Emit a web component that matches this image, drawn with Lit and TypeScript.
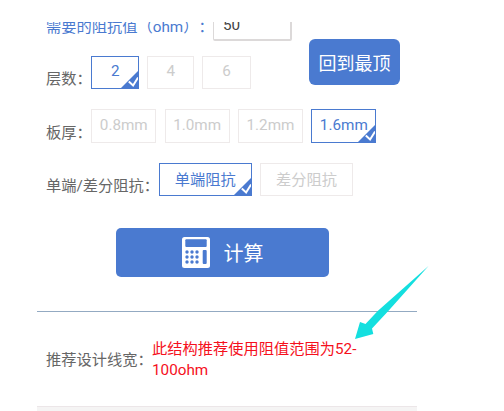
import { LitElement, html, css, svg } from "lit";
import { customElement } from "lit/decorators.js";

const cols = [0, 1, 2];
const rows = [0, 1, 2];

@customElement("app-root")
export class AppRoot extends LitElement {
  static styles = css`
    :host {
      display: block;
      position: relative;
      width: 504px;
      height: 411px;
      overflow: hidden;
      background: #fff;
      font-family: Roboto, "Noto Sans CJK SC", sans-serif;
      font-size: 15.25px;
      color: #666;
      text-spacing-trim: space-all;
    }
    .main {
      display: flex;
      flex-direction: column;
      padding: 22px 87px 0 37px;
    }
    .clip {
      height: 19px;
      overflow: hidden;
      display: flex;
      align-items: flex-end;
      margin-bottom: 15px;
    }
    .clip-row {
      display: flex;
      align-items: center;
      padding-left: 9px;
      flex: none;
    }
    .clip-label {
      color: #4a7ad0;
      width: 167px;
      white-space: nowrap;
      padding-top: 2px;
    }
    .input {
      box-sizing: border-box;
      width: 79px;
      height: 34px;
      border: 1px solid #dcd9d9;
      border-bottom-width: 2px;
      border-right-width: 2px;
      border-radius: 2px;
      padding: 2px 0 0 9px;
      line-height: 30px;
      color: #444;
    }
    .row {
      display: flex;
      align-items: center;
      padding-left: 9px;
      white-space: nowrap;
    }
    .lab {
      flex: none;
      padding-top: 9px;
    }
    .chips {
      display: flex;
      gap: 8px;
    }
    .chips.wide {
      gap: 8.35px;
    }
    .chip {
      box-sizing: border-box;
      position: relative;
      height: 33.4px;
      padding-bottom: 3px;
      display: flex;
      align-items: center;
      justify-content: center;
      border: 1px solid #eeeaea;
      color: #ccc;
      overflow: hidden;
    }
    .chip.on {
      border-color: #4a7ad0;
      color: #4a7ad0;
    }
    .corner {
      position: absolute;
      right: -1px;
      bottom: -1px;
      width: 19px;
      height: 19px;
    }
    .r1 { margin-bottom: 20px; }
    .r2 { margin-bottom: 20px; }
    .calc {
      align-self: flex-start;
      margin: 32px 0 34px 79px;
      width: 213px;
      height: 48.4px;
      background: #4a7ad0;
      border-radius: 5px;
      display: flex;
      align-items: center;
      justify-content: center;
      gap: 14px;
      color: #fff;
      font-size: 20px;
    }
    .calc svg { display: block; flex: none; }
    hr {
      width: 380px;
      margin: 0;
      border: 0;
      border-top: 1px solid #93aac2;
    }
    .result {
      display: flex;
      align-items: center;
      padding: 24px 0 0 9px;
      height: 69px;
      box-sizing: border-box;
    }
    .result .lab {
      width: 106.8px;
      margin-right: -0.8px;
      padding-top: 0;
      white-space: nowrap;
    }
    .red {
      color: #f5101c;
      width: 208px;
      line-height: 21px;
      padding-top: 3px;
    }
    .foot {
      margin-top: 25px;
      width: 380px;
      height: 10px;
      background: #f5f4f4;
      border-top: 1px solid #ece6e8;
    }
    .top {
      position: absolute;
      left: 309px;
      top: 39px;
      width: 91px;
      height: 46px;
      border-radius: 6px;
      background: #4a7ad0;
      color: #fff;
      font-size: 18px;
      display: flex;
      align-items: center;
      justify-content: center;
    }
    .arrow {
      position: absolute;
      left: 0;
      top: 0;
      pointer-events: none;
    }
  `;

  private corner() {
    return html`<svg class="corner" viewBox="0 0 19 19">
      <path d="M19 0V19H0Z" fill="#4a7ad0"></path>
      <path d="M8.8 11.5l4.3 4 5-8" fill="none" stroke="#fff" stroke-width="2"></path>
    </svg>`;
  }

  private chip(text: string, w: number, on = false) {
    return html`<div class="chip ${on ? "on" : ""}" style="width:${w}px">
      ${text}${on ? this.corner() : ""}
    </div>`;
  }

  private calcIcon() {
    return html`<svg width="28" height="31" viewBox="0 0 28 31">
      <rect width="28" height="31" rx="2.5" fill="#fff"></rect>
      <rect x="3.3" y="2.3" width="21.4" height="7.7" rx="1" fill="#4a7ad0"></rect>
      ${rows.map((r) =>
        cols.map(
          (c) => svg`<circle cx="${5 + c * 5}" cy="${15 + r * 5}" r="1.7" fill="#4a7ad0"></circle>`
        )
      )}
      <rect x="20.7" y="13" width="4" height="14" rx="1" fill="#4a7ad0"></rect>
    </svg>`;
  }

  render() {
    return html`
      <div class="main">
        <div class="clip">
          <div class="clip-row">
            <div class="clip-label">需要的阻抗值（ohm）：</div>
            <div class="input">50</div>
          </div>
        </div>
        <div class="row r1">
          <div class="lab" style="width:45.3px">层数：</div>
          <div class="chips">
            ${this.chip("2", 48, true)}${this.chip("4", 47)}${this.chip("6", 48.4)}
          </div>
        </div>
        <div class="row r2">
          <div class="lab" style="width:45.3px">板厚：</div>
          <div class="chips wide">
            ${this.chip("0.8mm", 65)}${this.chip("1.0mm", 65)}${this.chip("1.2mm", 65)}${this.chip("1.6mm", 65, true)}
          </div>
        </div>
        <div class="row">
          <div class="lab" style="width:112.7px">单端/差分阻抗：</div>
          <div class="chips">
            ${this.chip("单端阻抗", 93.3, true)}${this.chip("差分阻抗", 93)}
          </div>
        </div>
        <div class="calc">${this.calcIcon()}<span>计算</span></div>
        <hr />
        <div class="result">
          <div class="lab">推荐设计线宽：</div>
          <div class="red">此结构推荐使用阻值范围为52-100ohm</div>
        </div>
        <div class="foot"></div>
      </div>
      <div class="top">回到最顶</div>
      <svg class="arrow" width="504" height="411" viewBox="0 0 504 411">
        <path d="M428.5 266L388.3 311L372 328.5L373.3 334L355 339L360 322L365.5 324L377.7 311Z" fill="#14dfdf"></path>
      </svg>
    `;
  }
}
